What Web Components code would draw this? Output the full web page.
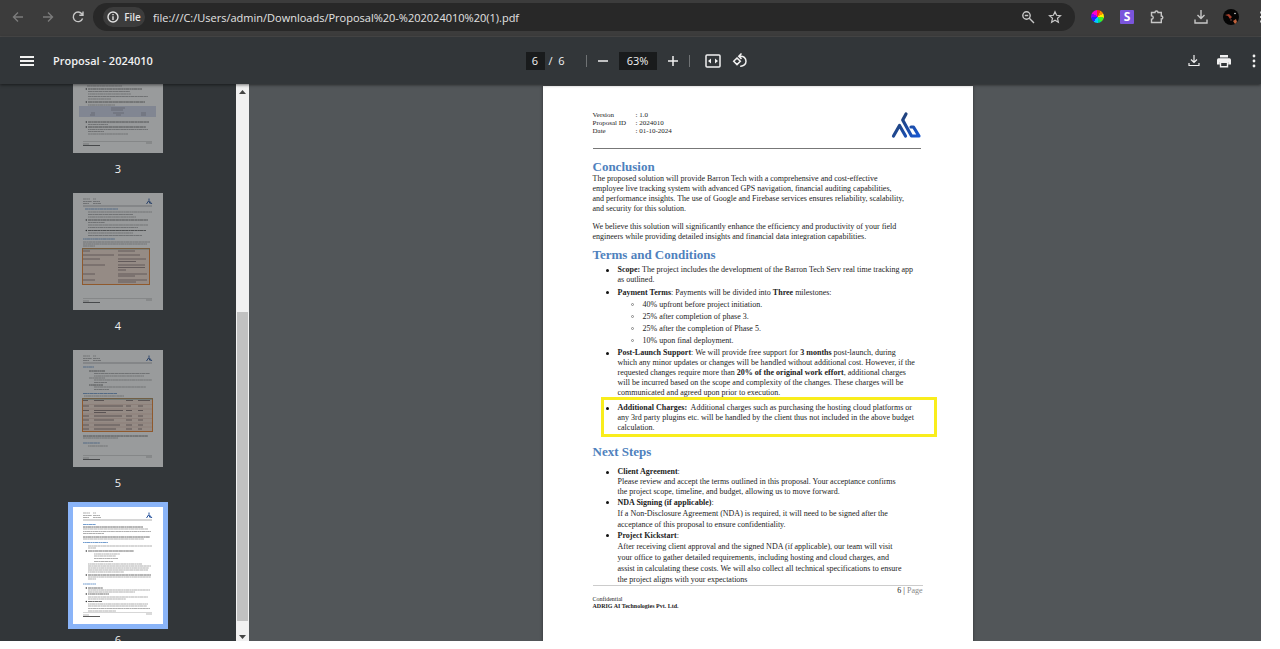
<!DOCTYPE html>
<html lang="en">
<head>
<meta charset="utf-8">
<title>Proposal - 2024010</title>
<style>
html,body{margin:0;height:100%;background:#fff}
body{font-family:"Open Sans","Noto Sans",sans-serif;overflow:hidden}
</style>
</head>
<body>
<pdf-app></pdf-app>

<template id="t-app">
<style>
:host{display:flex;flex-direction:column;margin-right:19px;height:calc(100% - 8px);overflow:hidden;background:#525659}
main{flex:1;display:flex;min-height:0}
.view{flex:1;display:flex;justify-content:center;align-items:flex-start;overflow:hidden;padding:2px 0 0 5px}
</style>
<browser-bar></browser-bar>
<pdf-toolbar doc="Proposal - 2024010"></pdf-toolbar>
<main><pdf-sidebar></pdf-sidebar><div class="view"><pdf-page></pdf-page></div></main>
</template>

<template id="t-browser">
<style>
:host{display:flex;align-items:center;height:33px;padding:0 0 3px 10px;border-bottom:1px solid #4a4a4a;background:#3c3c3c;color:#c7c7c7;flex:none;overflow:hidden}
button{all:unset;display:flex;flex:none;align-items:center;justify-content:center;width:16px;height:16px}
svg{display:block;fill:none;stroke:currentColor;stroke-width:1.4}
.nav{display:flex;gap:14px;margin-right:7px}
.dim{color:#7b7b7b}
form{flex:1;display:flex;align-items:center;height:28px;margin-top:1px;border-radius:14px;background:#282828;padding:0 12px 0 10px;min-width:0}
.chip{width:42px;height:20px;border-radius:10px;background:#3c3c3c;color:#e3e3e3;font-size:10px;font-weight:600;gap:5px}
input{flex:1;min-width:0;border:0;outline:0;background:none;color:#e3e3e3;font:11px "Open Sans","Noto Sans",sans-serif;padding:0;margin:0 8px 0 8px}
.in{display:flex;gap:11px}
.ext{display:flex;align-items:center;gap:14px;margin-left:14px;flex:none;width:172px}
.s{width:14px;height:14px;margin:0 1px;border-radius:1px;background:#7a55dc;color:#fff;font-size:12px;font-weight:700;line-height:14px}
.wheel{width:13px;height:13px;margin:0 1px 0 2px;border-radius:50%;background:conic-gradient(#f22 0 8%,#f80 0 18%,#fe0 0 28%,#4e2 0 40%,#0d8 0 50%,#0cf 0 60%,#22f 0 72%,#80f 0 83%,#f0c 0)}
i{width:1px;height:13px;background:#666;margin:0}
</style>
<nav class="nav">
<button class="dim" aria-label="Back"><svg width="14" height="14" viewBox="0 0 14 14"><path d="M12 7H3M7 2.5 2.5 7 7 11.500"/></svg></button>
<button class="dim" aria-label="Forward"><svg width="14" height="14" viewBox="0 0 14 14"><path d="M2 7h9M7 2.500 11.500 7 7 11.500"/></svg></button>
<button aria-label="Reload"><svg width="14" height="14" viewBox="0 0 14 14"><path d="M11.600 8.500A4.800 4.800 0 1 1 10.800 3.800L12 5M12 1.500V5.200H8.300"/></svg></button>
</nav>
<form onsubmit="return false">
<button class="chip" type="button"><svg width="12" height="12" viewBox="0 0 12 12" stroke-width="1.100"><circle cx="6" cy="6" r="5"/><path d="M6 5.200V9M6 3v1.200"/></svg>File</button>
<input aria-label="Address" value="file:///C:/Users/admin/Downloads/Proposal%20-%202024010%20(1).pdf">
<span class="in">
<button type="button" aria-label="Zoom"><svg width="14" height="14" viewBox="0 0 14 14"><circle cx="5.500" cy="5.500" r="3.700"/><path d="M8.300 8.300 13 13M3.800 5.500h3.400"/></svg></button>
<button type="button" aria-label="Bookmark"><svg width="14" height="14" viewBox="0 0 14 14" style="stroke-width:1.200"><path d="m7 1.700 1.600 3.600 3.900.4-3 2.600.9 3.900L7 10.200l-3.400 2 .9-3.900-3-2.600 3.900-.4z"/></svg></button>
</span>
</form>
<div class="ext">
<button class="wheel" aria-label="Color extension"></button>
<button class="s" aria-label="S extension">S</button>
<button aria-label="Extensions"><svg width="16" height="16" viewBox="0 0 16 16"><path d="M2.500 3.500H6c0-2 3-2 3 0h3.300V7c2 0 2 3 0 3v3.500H2.500v-3.200c2.300 0 2.300-3.400 0-3.400z"/></svg></button>
<i></i>
<button aria-label="Downloads"><svg width="16" height="16" viewBox="0 0 16 16"><path d="M8 1v8.500M4.500 6 8 9.500 11.500 6M2 10.500V14h12v-3.500"/></svg></button>
<button aria-label="Profile"><svg width="16" height="16" viewBox="0 0 16 16" style="stroke:none"><circle cx="8" cy="8" r="8" fill="#050505"/><path d="M2 6l4-1 3 3-2 2-2-3z" fill="#a8402c"/><path d="M10 12l3-2 1 3-2 2z" fill="#c0633c"/><circle cx="12" cy="4.500" r=".8" fill="#ddd"/><circle cx="8" cy="11" r=".7" fill="#955"/></svg></button>
<button aria-label="Menu"><svg width="16" height="16" viewBox="0 0 16 16"><path d="M8 2.500v2M8 7v2M8 11.500v2" stroke-width="2"/></svg></button>
</div>
</template>

<template id="t-toolbar">
<style>
:host{display:grid;grid-template-columns:1fr auto 1fr;align-items:center;height:47px;padding:0 5px 0 17px;background:#323639;color:#f1f1f1;font-size:12px;flex:none;position:relative;z-index:2;box-shadow:0 1px 3px #0008}
button{all:unset;display:flex;flex:none;justify-content:center;align-items:center;width:16px;height:16px}
svg{display:block;fill:none;stroke:currentColor;stroke-width:1.5}
.l{display:flex;align-items:center;gap:18px;padding-left:2px}
h1{margin:0;font-size:11px;font-weight:600;line-height:16px;white-space:nowrap}
.c{display:flex;align-items:center;gap:8px}
label{display:flex;width:52px;gap:4px;align-items:center;white-space:pre;font-size:11px}
input{box-sizing:border-box;width:38px;height:18px;border:0;padding:0;background:#191b1c;color:#f1f1f1;text-align:center;font:11px "Open Sans","Noto Sans",sans-serif}
label input{width:19px}
i{width:1px;height:12px;background:#6f7274}
.fit{display:flex;gap:11px;margin-left:7px}
.r{display:flex;justify-content:flex-end;gap:14px}
.more{width:4px;margin-left:6px}
</style>
<div class="l"><button aria-label="Menu"><svg width="14" height="12" viewBox="0 0 14 12"><path d="M0 2h14M0 6h14M0 10h14" style="stroke-width:2"/></svg></button><h1></h1></div>
<div class="c">
<label><input aria-label="Page" value="6"><span>/  6</span></label><i></i>
<button aria-label="Zoom out"><svg width="12" height="12" viewBox="0 0 12 12"><path d="M1 6h10"/></svg></button>
<input aria-label="Zoom level" value="63%">
<button aria-label="Zoom in"><svg width="12" height="12" viewBox="0 0 12 12"><path d="M1 6h10M6 1v10"/></svg></button><i></i>
<span class="fit">
<button aria-label="Fit to page"><svg width="16" height="14" viewBox="0 0 16 14"><rect x="1" y="1" width="14" height="12" rx="1"/><path d="M6 4.500v5L3 7zM10 4.500v5L13 7z" fill="currentColor" stroke="none"/></svg></button>
<button aria-label="Rotate"><svg width="16" height="16" viewBox="0 0 16 16"><path d="m5 5 3.300 3.300L5 11.600 1.700 8.300zM8 3.200c3.500-.4 6 2 6 5s-2.500 5.300-5.800 5M9.500.5 6.800 3.200l2.700 2.700"/></svg></button>
</span></div>
<div class="r">
<button aria-label="Download"><svg width="12" height="13" viewBox="0 0 12 13" style="stroke-width:1.200"><path d="M6 1v7.500M3 5.500l3 3 3-3M1 9v2.500h10V9"/></svg></button>
<button aria-label="Print"><svg width="14" height="14" viewBox="0 0 14 14" style="stroke:none;fill:currentColor"><path d="M3 1h8v2.500H3zM1.500 4.300h11Q14 4.300 14 6v4.500h-2.800V8H2.800v2.500H0V6q0-1.700 1.500-1.700z"/><path d="M2.800 8h8.400v5.500H2.800z"/><path d="M4.200 9h5.600v3H4.200z" fill="#323639"/></svg></button>
<button class="more" aria-label="More"><svg width="4" height="14" viewBox="0 0 4 14" style="stroke:none;fill:currentColor"><circle cx="2" cy="2" r="1.400"/><circle cx="2" cy="7" r="1.400"/><circle cx="2" cy="12" r="1.400"/></svg></button>
</div>
</template>

<template id="t-sidebar">
<style>
:host{display:flex;width:249px;flex:none;background:#323639;overflow:hidden}
.list{flex:1;overflow:hidden;margin-top:-53px}
.bar{width:13px;background:#f1f1f1;display:flex;flex-direction:column;align-items:center;justify-content:space-between}
.bar svg{flex:none;display:block}
.track{flex:1;width:11px;display:flex;flex-direction:column;justify-content:flex-end}
.thumb{height:59%;background:#c1c1c1}
</style>
<div class="list">
<page-thumb n="3"></page-thumb><page-thumb n="4"></page-thumb><page-thumb n="5"></page-thumb><page-thumb n="6" selected></page-thumb>
</div>
<div class="bar"><svg width="13" height="14"><path d="M3 10h7L6.500 6z" fill="#444"/></svg><div class="track"><div class="thumb"></div></div><svg width="13" height="20"><path d="M3 14h7l-3.500 4z" fill="#444"/></svg></div>
</template>

<template id="t-thumb">
<style>
:host{display:flex;flex-direction:column;align-items:center;height:157px;color:#f1f1f1}
.f{border:5px solid transparent;width:90px;height:117px}
.f svg{display:block;background:#fff;opacity:.5}
:host([selected]) .f{border-color:#8ab4f8}
:host([selected]) svg{opacity:1}
span{font-size:11px;line-height:16px;margin-top:3px}
</style>
<div class="f"></div><span></span>
</template>

<template id="t-logo">
<style>:host{display:block}svg{display:block}</style>
<svg width="30" height="28" viewBox="0 0 30 28" fill="none" stroke-width="3.200" stroke-linejoin="round" stroke-linecap="round"><defs><linearGradient id="g" x2="30" y2="28" gradientUnits="userSpaceOnUse"><stop offset=".2" stop-color="#23406f"/><stop offset="1" stop-color="#1659dc"/></linearGradient></defs><path d="M2.500 25 8.500 14.500l6 10.500M15 3 11.700 9 20.500 25H28l-5.500-9H20" stroke="url(#g)"/></svg>
</template>

<template id="t-page">
<style>
:host{display:block;box-sizing:border-box;width:430px;min-height:556px;padding:25px 50px 0;background:#fff;color:#1c1c1c;font:8px/10px "Liberation Serif",serif;white-space:nowrap;box-shadow:0 0 3px #0006}
header{display:flex;justify-content:space-between;align-items:flex-start;font-size:7px;line-height:8px;height:37px;margin:0 2px 0 0;border-bottom:1px solid #777}
dl{margin:0;display:grid;grid-template-columns:43px auto}
dt,dd{margin:0}
h2{margin:0;font-size:13px;line-height:14px;color:#4f81bd}
p{margin:0}
ul{margin:0;padding:0 0 0 25px;list-style:none}
li{position:relative}
li::before{content:"";position:absolute;left:-12px;top:4px;width:3px;height:3px;border-radius:50%;background:#111}
ul ul li::before{background:none;box-sizing:border-box;border:1px solid #888}
ul ul{line-height:12px}
.hl::after{content:"";position:absolute;inset:-6px -14px -4px -17px;border:3px solid #f9ed1c}
footer{border-top:1px solid #ccc;font-size:6px;line-height:7px;color:#222}
.n{text-align:right;font-size:8px;line-height:10px}
.n span{color:#888}
</style>
<header><dl><dt>Version</dt><dd>: 1.0</dd><dt>Proposal ID</dt><dd>: 2024010</dd><dt>Date</dt><dd>: 01-10-2024</dd></dl><adrig-logo></adrig-logo></header>
<h2 style="margin-top:11px">Conclusion</h2>
<p>The proposed solution will provide Barron Tech with a comprehensive and cost-effective<br>employee live tracking system with advanced GPS navigation, financial auditing capabilities,<br>and performance insights. The use of Google and Firebase services ensures reliability, scalability,<br>and security for this solution.</p>
<p style="margin-top:8px">We believe this solution will significantly enhance the efficiency and productivity of your field<br>engineers while providing detailed insights and financial data integration capabilities.</p>
<h2 style="margin-top:6px">Terms and Conditions</h2>
<ul>
<li style="margin-top:3px"><b>Scope:</b> The project includes the development of the Barron Tech Serv real time tracking app<br>as outlined.</li>
<li style="margin-top:2px;line-height:12px"><b>Payment Terms</b>: Payments will be divided into <b>Three</b> milestones:
<ul><li>40% upfront before project initiation.</li><li>25% after completion of phase 3.</li><li>25% after the completion of Phase 5.</li><li>10% upon final deployment.</li></ul></li>
<li style="margin-top:1px"><b>Post-Launch Support</b>: We will provide free support for <b>3 months</b> post-launch, during<br>which any minor updates or changes will be handled without additional cost. However, if the<br>requested changes require more than <b>20% of the original work effort</b>, additional charges<br>will be incurred based on the scope and complexity of the changes. These charges will be<br>communicated and agreed upon prior to execution.</li>
<li class="hl" style="margin-top:5px"><b>Additional Charges:</b>&nbsp; Additional charges such as purchasing the hosting cloud platforms or<br>any 3rd party plugins etc. will be handled by the client thus not included in the above budget<br>calculation.</li>
</ul>
<h2 style="margin-top:12px">Next Steps</h2>
<ul style="margin-top:8px">
<li><b>Client Agreement</b>:<br>Please review and accept the terms outlined in this proposal. Your acceptance confirms<br>the project scope, timeline, and budget, allowing us to move forward.</li>
<li style="line-height:11px"><b>NDA Signing (if applicable)</b>:<br>If a Non-Disclosure Agreement (NDA) is required, it will need to be signed after the<br>acceptance of this proposal to ensure confidentiality.</li>
<li style="line-height:11px"><b>Project Kickstart</b>:<br>After receiving client approval and the signed NDA (if applicable), our team will visit<br>your office to gather detailed requirements, including hosting and cloud charges, and<br>assist in calculating these costs. We will also collect all technical specifications to ensure<br>the project aligns with your expectations</li>
</ul>
<footer><div class="n">6 | <span>Page</span></div>Confidential<br><b>ADRIG AI Technologies Pvt. Ltd.</b></footer>
</template>

<script>
const attach=(el,id)=>{const r=el.attachShadow({mode:'open'});r.append(document.getElementById(id).content.cloneNode(true));return r};
const define=(name,id,init)=>customElements.define(name,class extends HTMLElement{
  constructor(){super();this.root=attach(this,id)}
  connectedCallback(){if(init)init(this,this.root)}
});

// Miniature page contents. Each row: y, x, width, kind (b bold, h heading).
const head=[[6,10,7],[8.5,10,9],[10.500,10,6],[6,20,3],[8.500,20,7],[10.500,20,8]];
const pages={
 3:{rows:[[50,14,35],[53,15,54,'b'],[55.500,15,42],[58,15,43],[60.500,15,60],[63,15,23],[66,15,57,'b'],[69,15,27],[86,15,61,'b'],[88.500,15,20],[91,15,58,'b'],[93.500,15,60],[95.500,15,16],[98,15,40]],
   extra:'<rect x="6" y="70" width="77" height="11" fill="#cfd6ea"/><path d="M38 72h14M38 74h12M18 77h4M40 77h11M68 77h5M17 79h5M43 79h5M68 79h5" stroke="#889" stroke-width=".7"/>'},
 4:{rows:[[16,12,33,'h'],[19,15,64],[21.500,15,45],[24,15,48],[27,15,60,'b'],[29.500,15,17],[32,15,60],[34.500,15,50],[37.500,15,58,'b'],[40,15,45],[42.500,15,54],[46,10,32,'h'],[49,10,67],[51,10,64],[53,10,12]],
   extra:'<rect x="9.500" y="55.500" width="67" height="36" fill="#f8dfd0" stroke="#eb7c22"/><path d="M9 56h68" stroke="#599" stroke-width=".6"/><path d="M10 58h7M45 58h17M10 62h31M45 62h22M10 66h17M45 66h28M45 68.500h18M10 72h22M45 72h27M45 74.500h27M45 77h8M10 81h12M45 81h29M45 83h17M10 87h12M45 87h29M45 89h18" stroke="#766" stroke-width=".8"/>'},
 5:{rows:[[17,10,11,'h'],[21,16,16,'b'],[23.500,21,56],[26,21,50],[28,16,16],[30,21,58],[32.500,21,13],[35,16,14,'b'],[37,21,52],[39.500,21,15],[43.500,10,34,'h'],[46,11,40],[86,10,65,'b'],[88,10,35],[93,10,17,'h'],[96,15,20]],
   extra:'<rect x="9.500" y="48.500" width="70" height="33" fill="#f8dfd0" stroke="#eb7c22"/><path d="M9 49h71" stroke="#599" stroke-width=".8"/><path d="M10 54.500h69M10 59h69M10 64h69M10 68.500h69M10 73h69M10 77h69" stroke="#ca9" stroke-width=".4"/><path d="M10 50.500h5M21 50.500h10M53 50.500h7M65 50.500h12M10 56h6M21 56h29M53 56h5M65 56h5M10 60.500h6M21 60.500h29M53 60.500h6M65 60.500h5M21 62.500h12M10 66h6M21 66h28M53 66h6M65 66h5M10 70h6M21 70h20M53 70h6M65 70h5M10 75h6M21 75h26M53 75h6M65 75h5M10 79h6M21 79h22M53 79h6M65 79h4" stroke="#655" stroke-width=".8"/>'},
 6:{rows:[[17.500,10,13,'h'],[20,10,60,'b'],[22,10,65],[24.500,10,68],[26.500,10,21],[30,10,67,'b'],[32,10,61],[35.500,10,25,'h'],[39,15,64],[41,15,8],[44,15,46,'b'],[47,21,26],[49,21,22],[51.500,21,24],[54.500,21,19],[57,15,54],[59,15,63],[61,15,61],[63,15,60],[65,15,36],[68,15,63,'b'],[70,15,63],[72,15,8],[77,10,13,'h'],[81,15,15,'b'],[83,15,62],[85,15,47],[87,15,21,'b'],[90,15,60],[92,15,38],[94.500,15,14,'b'],[97,15,60],[99,15,59],[101.500,15,62],[104,15,28]],extra:''}
};
const color={h:'#5b8cc6',b:'#555',undefined:'#888'};
const row=([y,x,w,k],i)=>`<path d="M${x} ${y}h${w}" stroke="${color[k]}" stroke-opacity=".85" stroke-width="${k?1:.8}" stroke-dasharray="${[3,2,4,1.500][i%4]} .3 2 .2 3.500 .3"/>`+(k==='b'&&x===15?`<circle cx="13.300" cy="${y}" r=".7" fill="#222"/>`:'');
const miniature=n=>{const p=pages[n];return `<svg width="90" height="117" viewBox="0 0 90 117" fill="none">${head.map(row).join('')}<path d="M10 13h69" stroke="#777" stroke-width=".6"/><path d="m73.500 11 2-3 2 3M76 5.500v2l3 3.500" stroke="#23509b" stroke-width="1"/>${p.rows.map(row).join('')}${p.extra}<path d="M10 105.500h69" stroke="#999" stroke-width=".4"/><path d="M73 107h6M10 108h6" stroke="#999" stroke-width=".7"/><path d="M10 109.500h17" stroke="#333" stroke-width=".8"/></svg>`};

define('adrig-logo','t-logo');
define('pdf-page','t-page');
define('page-thumb','t-thumb',(el,r)=>{const n=el.getAttribute('n');r.querySelector('.f').innerHTML=miniature(n);r.querySelector('span').textContent=n});
define('pdf-sidebar','t-sidebar');
define('pdf-toolbar','t-toolbar',(el,r)=>{r.querySelector('h1').textContent=el.getAttribute('doc')});
define('browser-bar','t-browser');
define('pdf-app','t-app');
</script>
</body>
</html>
